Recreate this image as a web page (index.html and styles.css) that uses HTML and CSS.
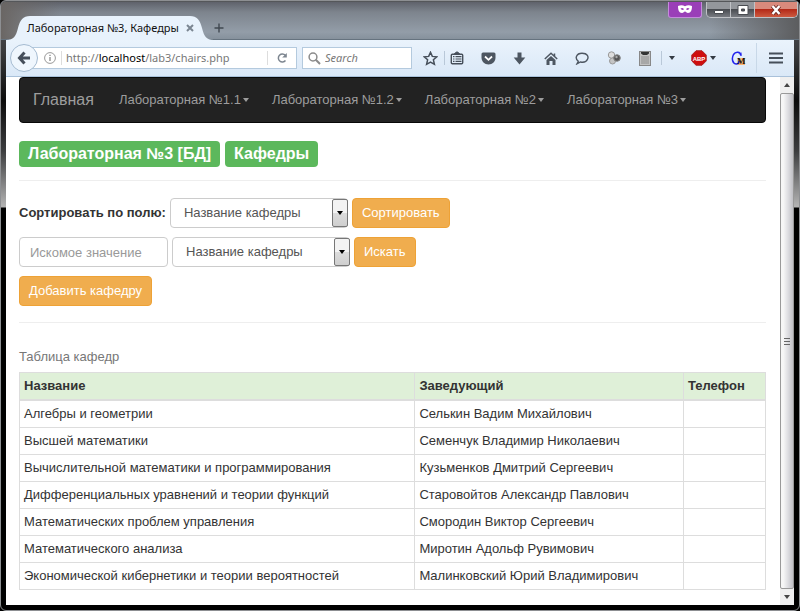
FILE: index.html
```html
<!DOCTYPE html>
<html lang="ru">
<head>
<meta charset="utf-8">
<title>Лабораторная №3, Кафедры</title>
<link rel="stylesheet" href="styles.css">
</head>
<body>
<div class="window">
  <header class="titlebar">
    <div class="tab">
      <svg class="tab-shape" viewBox="0 0 208 24" preserveAspectRatio="none" aria-hidden="true"><path d="M0 24C8 24 10 20 12 12C14 4 17 0 24 0H184C191 0 194 4 196 12C198 20 200 24 208 24Z" fill="#e8f2fc"/></svg>
      <span class="tab-title">Лабораторная №3, Кафедры</span>
      <button class="plain tab-close" aria-label="Закрыть вкладку"><svg width="8" height="8" viewBox="0 0 8 8"><path d="M1 1L7 7M7 1L1 7" stroke="#7b8692" stroke-width="2"/></svg></button>
    </div>
    <button class="plain new-tab" aria-label="Новая вкладка"><svg width="10" height="10" viewBox="0 0 10 10"><path d="M5 .5V9.500M.5 5H9.500" stroke="#404850" stroke-width="1.400"/></svg></button>
    <div class="private"><svg width="14" height="9" viewBox="0 0 14 9"><path fill="#fff" fill-rule="evenodd" d="M0 1C3-.3 5 .2 7 1.3C9 .2 11-.3 14 1C14 5 13 8 10 8C8.500 8 8 6.500 7 6.500S5.500 8 4 8C1 8 0 5 0 1ZM2.500 3.800C3.500 2.800 5 2.800 6 4.200C5 5.200 3.500 5.200 2.500 3.800ZM11.500 3.800C10.500 2.800 9 2.800 8 4.200C9 5.200 10.500 5.200 11.500 3.800Z"/></svg></div>
    <div class="controls">
      <button class="plain control" aria-label="Свернуть"><svg width="12" height="10" viewBox="0 0 12 10"><path d="M1.500 5.500H10.500V8.500H1.500Z" fill="#fff" stroke="#4a4d52"/></svg></button>
      <button class="plain control" aria-label="Развернуть"><svg width="12" height="10" viewBox="0 0 12 10"><path d="M1 .5H11V9.500H1ZM4.500 4H7.500V6H4.500Z" fill="#fff" fill-rule="evenodd" stroke="#4a4d52"/></svg></button>
      <button class="plain control control-close" aria-label="Закрыть"><svg width="12" height="10" viewBox="0 0 12 10"><path d="M2.500 1L9.500 9M9.500 1L2.500 9" stroke="#6b2a24" stroke-width="4"/><path d="M2.500 1L9.500 9M9.500 1L2.500 9" stroke="#fff" stroke-width="2.400"/></svg></button>
    </div>
  </header>

  <div class="toolbar">
    <button class="plain back" aria-label="Назад"><svg width="14" height="14" viewBox="0 0 14 14"><path d="M7.500 1.500L2.500 7L7.500 12.500M3 7H13" fill="none" stroke="#454e5a" stroke-width="3"/></svg></button>
    <div class="address">
      <svg width="12" height="12" viewBox="0 0 12 12"><circle cx="6" cy="6" r="5.400" fill="none" stroke="#999"/><path d="M6 5V9M6 2.700V4" stroke="#888" stroke-width="1.300"/></svg>
      <span class="url">http://<b>localhost</b>/lab3/chairs.php</span>
      <button class="plain reload" aria-label="Обновить"><svg width="12" height="12" viewBox="0 0 12 12"><path d="M9.500 8.500A4 4 0 1 1 9.300 3.300" fill="none" stroke="#7d8690" stroke-width="1.500"/><path d="M10.800 1V5.600H6.200Z" fill="#7d8690"/></svg></button>
    </div>
    <label class="search">
      <svg width="13" height="13" viewBox="0 0 13 13"><circle cx="5" cy="5" r="3.900" fill="none" stroke="#8b8b8b" stroke-width="1.500"/><path d="M7.800 7.800L12 12" stroke="#8b8b8b" stroke-width="2"/></svg>
      <input type="text" placeholder="Search" aria-label="Search">
    </label>
    <button class="plain star" aria-label="Закладка"><svg width="15" height="15" viewBox="0 0 15 15"><path d="M7.500 1.300L9.300 5.400L13.700 5.800L10.400 8.800L11.400 13.300L7.500 11L3.600 13.300L4.600 8.800L1.300 5.800L5.700 5.400Z" fill="none" stroke="#464f5a" stroke-width="1.500"/></svg></button>
    <div class="icons">
      <button class="plain" aria-label="Закладки"><svg width="14" height="14" viewBox="0 0 14 14"><path d="M4.500 3V2.500L7 .8L9.500 2.500V3" fill="#464f5a" stroke="#464f5a"/><rect x="1.300" y="3.200" width="11.400" height="9.500" rx="1" fill="none" stroke="#464f5a" stroke-width="1.400"/><path d="M3 5.700H4.500M5.500 5.700H11.500M3 8H4.500M5.500 8H11.500M3 10.300H4.500M5.500 10.300H11.500" stroke="#464f5a" stroke-width="1.200"/></svg></button>
      <button class="plain" aria-label="Pocket"><svg width="15" height="13" viewBox="0 0 15 13"><path d="M2 .5H13Q14.500 .5 14.500 2V5.500C14.500 9.500 11.500 12.500 7.500 12.500S.5 9.500 .5 5.500V2Q.5 .5 2 .5Z" fill="#4d5661"/><path d="M4 4.500L7.500 7.800L11 4.500" fill="none" stroke="#fff" stroke-width="1.800"/></svg></button>
      <button class="plain" aria-label="Загрузки"><svg width="13" height="13" viewBox="0 0 13 13"><path d="M4.500 .5H8.500V5.500H12.300L6.500 12.500L.7 5.500H4.500Z" fill="#4d5661"/></svg></button>
      <button class="plain" aria-label="Домой"><svg width="14" height="13" viewBox="0 0 14 13"><path d="M.8 7L7 1.300L13.200 7M10.500 1.500V4" fill="none" stroke="#4d5661" stroke-width="1.500"/><path d="M7 4L11.500 8V13H8.500V9H5.500V13H2.500V8Z" fill="#4d5661"/></svg></button>
      <button class="plain" aria-label="Чат"><svg width="14" height="13" viewBox="0 0 14 13"><path d="M3.300 9.200C-.5 6.500 1.200 1.300 7 1.300S13.700 5 12.500 7.300C11.300 10 8 10.500 5.500 10L2 11.800Z" fill="none" stroke="#4d5661" stroke-width="1.400"/></svg></button>
      <button class="plain" aria-label="Дополнение"><svg width="14" height="14" viewBox="0 0 14 14"><circle cx="4.500" cy="4" r="3.200" fill="#ddd" stroke="#999"/><circle cx="5.500" cy="10" r="3" fill="#c4c4c4" stroke="#999"/><circle cx="10" cy="7" r="3.300" fill="#555" stroke="#888"/><circle cx="9.500" cy="6" r="1.200" fill="#aaa"/></svg></button>
      <button class="plain" aria-label="Калькулятор"><svg width="12" height="15" viewBox="0 0 12 15"><rect x=".5" y=".5" width="11" height="14" fill="#c2c2c2" stroke="#888"/><path d="M2 1H10V2.500L8 4H4L2 2.500Z" fill="#333"/><path d="M3 5.500V13M5 5.500V13M7 5.500V13M9 5.500V13" stroke="#5a5a5a" stroke-dasharray="1 1"/></svg></button>
    </div>
    <button class="plain more" aria-label="Ещё"><span class="caret"></span></button>
    <button class="plain abp" aria-label="Adblock Plus"><svg width="16" height="16" viewBox="0 0 16 16"><path d="M5 .8H11L15.200 5V11L11 15.200H5L.8 11V5Z" fill="#cf0d0d" stroke="#a22"/><text x="8" y="10.500" text-anchor="middle" class="abp-text">ABP</text></svg><span class="caret"></span></button>
    <button class="plain gm" aria-label="Дополнение GM"><svg width="15" height="15" viewBox="0 0 15 15"><rect x="7" y="7" width="7" height="7" fill="#f9b572"/><path d="M9.800 4.500C9.500 .5 4.500 .3 2.500 3.500C.3 7.500 1.500 13 5.500 13C7 13 8 12 8 10" fill="none" stroke="#2222ee" stroke-width="1.500"/><path d="M10 1.500V5" stroke="#2222ee"/><text x="6" y="13" class="gm-text">M</text></svg></button>
    <button class="plain menu" aria-label="Меню"><svg width="14" height="12" viewBox="0 0 14 12"><path d="M0 1.500H14M0 6H14M0 10.500H14" stroke="#464f5a" stroke-width="2"/></svg></button>
  </div>

  <div class="viewport">
    <main class="page">
      <nav class="navbar">
        <a class="brand" href="#">Главная</a>
        <a href="#">Лабораторная №1.1<span class="caret"></span></a>
        <a href="#">Лабораторная №1.2<span class="caret"></span></a>
        <a href="#">Лабораторная №2<span class="caret"></span></a>
        <a href="#">Лабораторная №3<span class="caret"></span></a>
      </nav>
      <h1 class="labels"><span>Лабораторная №3 [БД]</span><span>Кафедры</span></h1>
      <hr>
      <div class="forms">
        <form class="row">
          <label for="sort">Сортировать по полю:</label>
          <div class="select"><select id="sort"><option>Название кафедры</option></select><span class="drop"></span></div>
          <button type="button" class="btn">Сортировать</button>
        </form>
        <form class="row">
          <input class="field" type="text" placeholder="Искомое значение" aria-label="Искомое значение">
          <div class="select"><select aria-label="Поле поиска"><option>Название кафедры</option></select><span class="drop"></span></div>
          <button type="button" class="btn">Искать</button>
        </form>
        <div class="row"><button type="button" class="btn">Добавить кафедру</button></div>
      </div>
      <hr>
      <table>
        <caption>Таблица кафедр</caption>
        <colgroup><col class="col-name"><col class="col-head"><col class="col-phone"></colgroup>
        <thead><tr><th>Название</th><th>Заведующий</th><th>Телефон</th></tr></thead>
        <tbody>
          <tr><td>Алгебры и геометрии</td><td>Селькин Вадим Михайлович</td><td></td></tr>
          <tr><td>Высшей математики</td><td>Семенчук Владимир Николаевич</td><td></td></tr>
          <tr><td>Вычислительной математики и программирования</td><td>Кузьменков Дмитрий Сергеевич</td><td></td></tr>
          <tr><td>Дифференциальных уравнений и теории функций</td><td>Старовойтов Александр Павлович</td><td></td></tr>
          <tr><td>Математических проблем управления</td><td>Смородин Виктор Сергеевич</td><td></td></tr>
          <tr><td>Математического анализа</td><td>Миротин Адольф Рувимович</td><td></td></tr>
          <tr><td>Экономической кибернетики и теории вероятностей</td><td>Малинковский Юрий Владимирович</td><td></td></tr>
        </tbody>
      </table>
    </main>
    <div class="scrollbar">
      <button class="plain arrow" aria-label="Вверх"><span class="up"></span></button>
      <div class="thumb"><span class="grip"></span></div>
      <button class="plain arrow" aria-label="Вниз"><span class="caret"></span></button>
    </div>
  </div>
</div>
</body>
</html>
```
FILE: styles.css
```css
* { box-sizing: border-box; }

body {
  margin: 0;
  background: #000;
  font: 13px/18px "Liberation Sans", Arial, sans-serif;
  color: #333;
}

svg { flex: none; }

.window {
  display: flex;
  flex-direction: column;
  min-height: 100vh;
  padding: 1px 5px 5px;
  border: 1px solid #8d8f92;
  border-radius: 6px;
  background: linear-gradient(#55575a 0, #3a3b3d 50px, #0c0c0c 100px, #3c3d3f 150px, #b4b4b4 206px, #000 207px);
}

.plain {
  display: flex;
  align-items: center;
  justify-content: center;
  padding: 0;
  border: 0;
  background: none;
  color: inherit;
}

.caret {
  border: 3px solid transparent;
  border-top: 4px solid currentColor;
  border-bottom: 0;
}

/* Title bar */
.titlebar {
  display: flex;
  align-items: flex-end;
  height: 38px;
  margin: 0 -5px;
  padding: 0 1px 0 5px;
  border-bottom: 1px solid #66737f;
  border-radius: 5px 5px 0 0;
  background:
    linear-gradient(90deg, #6a6664 0, transparent 60px, transparent calc(100% - 90px), #5c5d5f),
    linear-gradient(#5f626b, #7d848d 10px, #939da8 30px, #86919c);
}

.tab {
  position: relative;
  display: flex;
  align-items: center;
  width: 208px;
  height: 24px;
  margin-bottom: -1px;
  padding: 0 20px 0 21px;
  font: 11px/16px "Noto Sans", sans-serif;
  color: #111;
}

.tab-shape { position: absolute; inset: 0; width: 100%; height: 100%; }
.tab-title { position: relative; flex: 1; white-space: nowrap; }
.tab-close { position: relative; }
.new-tab { width: 10px; height: 22px; }

.private {
  display: flex;
  align-items: center;
  justify-content: center;
  align-self: flex-start;
  width: 34px;
  height: 16px;
  margin-left: auto;
  border: 1px solid #c58bdc;
  border-top: 0;
  border-radius: 0 0 3px 3px;
  background: #9a3fb8;
}

.controls {
  display: flex;
  align-self: flex-start;
  height: 16px;
  margin-left: 4px;
  overflow: hidden;
  border: 1px solid #c0c2c6;
  border-top: 0;
  border-radius: 0 0 5px 5px;
}

.control {
  width: 24px;
  border-right: 1px solid #c0c2c6;
  background: linear-gradient(#94979c 50%, #4a4d52 50%, #777a80);
}

.control-close {
  width: 42px;
  border: 0;
  background: linear-gradient(#d98a7c 45%, #b42a18 50%, #cd5a40);
}

/* Toolbar */
.toolbar {
  display: flex;
  align-items: center;
  height: 37px;
  padding-left: 4px;
  border-bottom: 1px solid #a9c1da;
  background: linear-gradient(#eaf3fc, #dae8f7);
  color: #333a42;
}

.back {
  position: relative;
  flex: none;
  width: 28px;
  height: 28px;
  border: 1px solid #a5bbd1;
  border-radius: 50%;
  background: #eff6fd;
}

.address {
  display: flex;
  flex: 1;
  align-items: center;
  height: 22px;
  margin-left: -8px;
  padding-left: 13px;
  border: 1px solid #b4cade;
  background: #fff;
}

.url {
  flex: 1;
  margin-left: 5px;
  padding-left: 4px;
  border-left: 1px solid #ddd;
  font: 11px/14px "Noto Sans", sans-serif;
  white-space: nowrap;
  color: #777;
}

.url b { font-weight: 400; color: #000; }
.reload { width: 29px; height: 14px; border-left: 1px solid #ddd; }

.search {
  display: flex;
  flex: none;
  align-items: center;
  gap: 4px;
  width: 110px;
  height: 22px;
  margin-left: 5px;
  padding-left: 5px;
  border: 1px solid #b4cade;
  background: #fff;
}

.search input {
  width: 100%;
  min-width: 0;
  padding: 0;
  border: 0;
  background: none;
  font: italic 11px/16px "Noto Sans", sans-serif;
}

::placeholder { color: #999; opacity: 1; }
.search ::placeholder { color: #777; }

.star { width: 33px; height: 14px; padding-left: 4px; border-right: 1px solid #b9c8d8; }
.icons { display: flex; width: 220px; margin-left: -4px; }
.icons button { flex: 1; }
.more { width: 20px; height: 14px; border-left: 1px solid #b9c8d8; }
.abp { gap: 3px; width: 44px; }
.abp-text { font: bold 6px "Liberation Sans", sans-serif; fill: #fff; }
.gm { width: 27px; margin-right: 4px; }
.gm-text { font: bold 9px "Liberation Serif", serif; fill: #111; }
.menu { width: 38px; height: 30px; border-left: 1px solid #c8d8e8; }

/* Page */
.viewport { display: flex; flex: 1; background: #fff; }
.page { flex: 1; padding: 0 14px 14px 13px; }

.navbar {
  display: flex;
  align-items: center;
  gap: 23px;
  height: 46px;
  padding: 0 13px;
  border: 1px solid #080808;
  border-radius: 4px;
  background: #222;
}

.navbar a {
  display: flex;
  align-items: center;
  gap: 2px;
  text-decoration: none;
  white-space: nowrap;
  color: #9d9d9d;
}

.navbar .brand { margin-right: 2px; font-size: 16px; }

.labels { display: flex; gap: 5px; margin: 18px 0 13px; font-size: 16px; line-height: 26px; }
.labels span { padding: 0 9px; border-radius: 4px; background: #5cb85c; color: #fff; }

hr { margin: 0; border: 0; border-top: 1px solid #eee; }

.forms { display: flex; flex-direction: column; gap: 9px; margin: 17px 0 16px; }
.row { display: flex; align-items: center; gap: 4px; }
.row label { font-weight: 700; }

.btn, .field, .select select {
  height: 30px;
  border: 1px solid #ccc;
  border-radius: 4px;
  font: 13px/18px "Liberation Sans", Arial, sans-serif;
}

.btn { padding: 0 9px; border-color: #eea236; background: #f0ad4e; color: #fff; }
.field { width: 149px; padding: 0 10px; }

.select { position: relative; width: 178px; }
.select select {
  width: 100%;
  padding: 0 13px;
  appearance: none;
  background: #fff;
  color: #555;
}

.drop {
  position: absolute;
  inset: 1px 0 1px auto;
  display: flex;
  align-items: center;
  justify-content: center;
  width: 16px;
  border: 1px solid #777;
  border-radius: 2px;
  background: linear-gradient(#f3f3f3 50%, #dcdcdc 50%, #cfcfcf);
  pointer-events: none;
}

.drop::after {
  content: "";
  border: 3px solid transparent;
  border-top: 4px solid #000;
  border-bottom: 0;
}

table {
  width: 100%;
  margin-top: 18px;
  table-layout: fixed;
  border-collapse: collapse;
}

caption { padding: 7px 0 6px; text-align: left; color: #777; }
.col-name { width: 53%; }
.col-head { width: 36%; }
.col-phone { width: 11%; }
th, td { padding: 4px; border: 1px solid #ddd; text-align: left; }
th { border-bottom-width: 2px; background: #dff0d8; }

/* Scrollbar */
.scrollbar { display: flex; flex-direction: column; width: 14px; background: #efefef; }
.arrow { height: 16px; color: #444; }
.up { border: 3px solid transparent; border-top: 0; border-bottom: 4px solid #444; }

.thumb {
  display: flex;
  flex: 1;
  align-items: center;
  justify-content: center;
  border: 1px solid #999;
  border-radius: 2px;
  background: linear-gradient(90deg, #f6f6f6 20%, #dcdce0 60%, #bfbfc4);
}

.grip {
  width: 6px;
  height: 7px;
  background: repeating-linear-gradient(#666 0, #666 1px, transparent 1px, transparent 3px);
}
```
